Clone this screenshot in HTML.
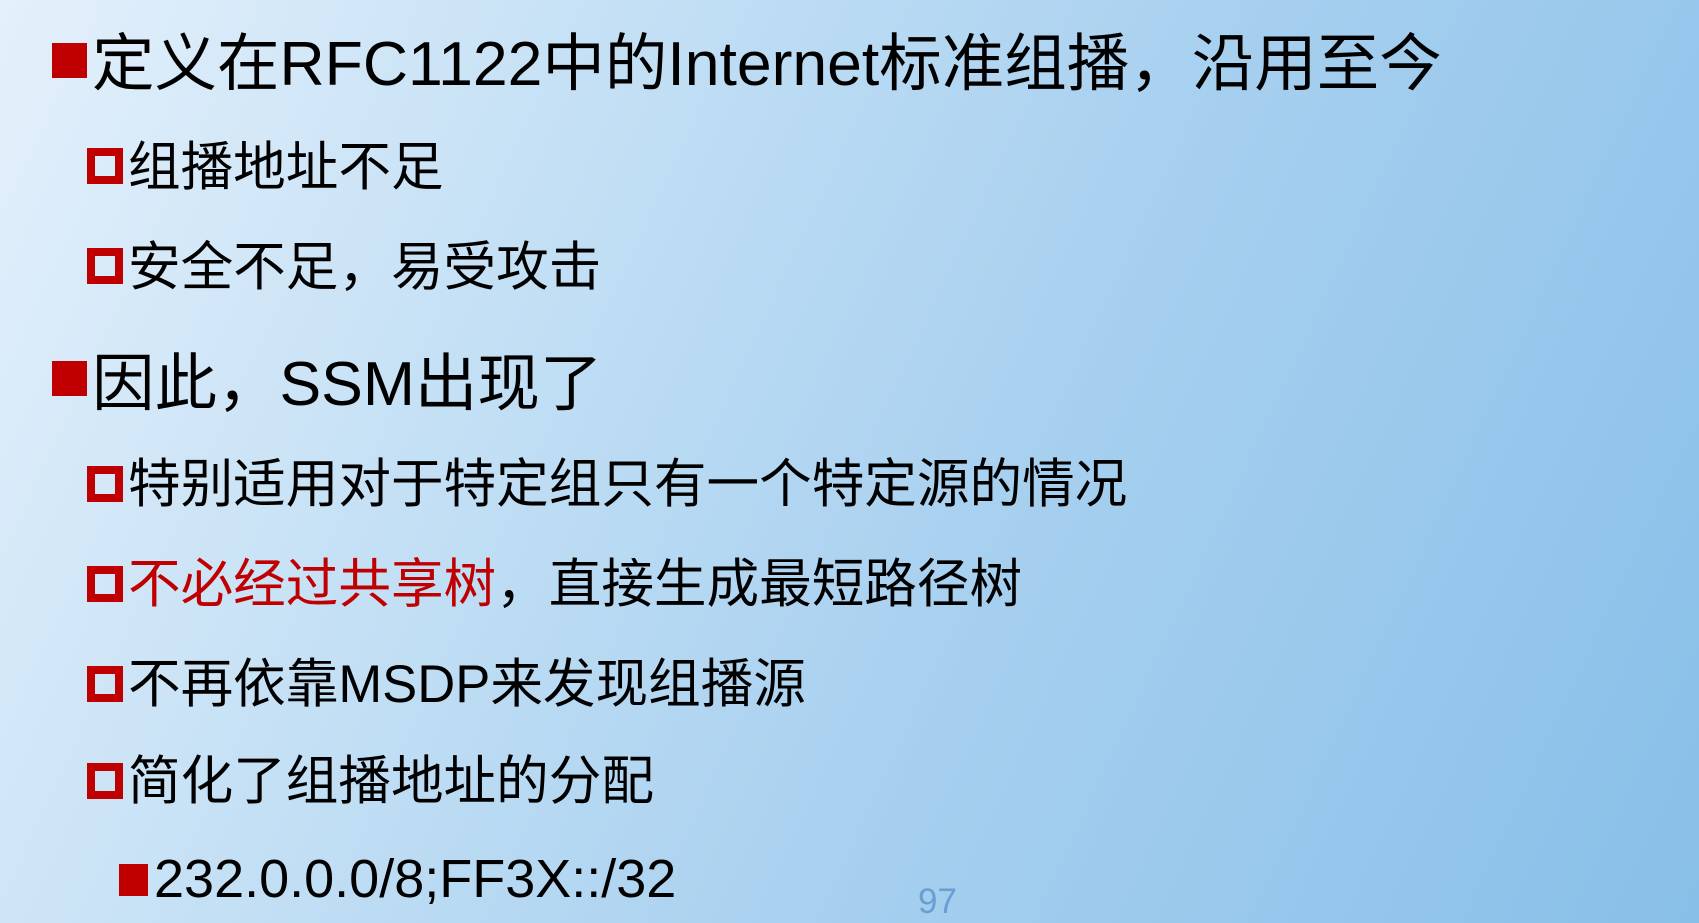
<!DOCTYPE html>
<html><head><meta charset="utf-8"><style>
html,body{margin:0;padding:0}
body{width:1699px;height:923px;overflow:hidden;position:relative;
background:linear-gradient(115deg,#e4f0fb 0%,#c4e0f5 30%,#a6cfef 60%,#88bfe8 100%);
font-family:"Liberation Sans","Noto Sans CJK SC",sans-serif;color:#000}
.t{position:absolute;white-space:nowrap;line-height:1}
.l1{font-size:62.5px}
.l2{font-size:52.6px}
.l3{font-size:54px}
.f{position:absolute;background:#c00000}
.h{position:absolute;border:8px solid #c00000;box-sizing:border-box;background:transparent}
.red{color:#c00000}
</style></head><body>
<div class="f" style="left:52px;top:43px;width:35px;height:35px"></div>
<div class="t l1" style="left:92px;top:33px">定义在RFC1122中的Internet标准组播，沿用至今</div>

<div class="h" style="left:87px;top:148px;width:36px;height:36px"></div>
<div class="t l2" style="left:128px;top:142px">组播地址不足</div>

<div class="h" style="left:87px;top:248px;width:36px;height:36px"></div>
<div class="t l2" style="left:128px;top:242px">安全不足，易受攻击</div>

<div class="f" style="left:52px;top:361px;width:35px;height:35px"></div>
<div class="t l1" style="left:92px;top:353px">因此，SSM出现了</div>

<div class="h" style="left:87px;top:466px;width:36px;height:36px"></div>
<div class="t l2" style="left:128px;top:459px">特别适用对于特定组只有一个特定源的情况</div>

<div class="h" style="left:87px;top:566px;width:36px;height:36px"></div>
<div class="t l2" style="left:128px;top:559px"><span class="red">不必经过共享树</span>，直接生成最短路径树</div>

<div class="h" style="left:87px;top:666px;width:36px;height:36px"></div>
<div class="t l2" style="left:128px;top:659px">不再依靠MSDP来发现组播源</div>

<div class="h" style="left:87px;top:763px;width:36px;height:36px"></div>
<div class="t l2" style="left:128px;top:756px">简化了组播地址的分配</div>

<div class="f" style="left:119px;top:864px;width:29px;height:32px"></div>
<div class="t l3" style="left:154px;top:852px">232.0.0.0/8;FF3X::/32</div>

<div class="t" style="left:918px;top:884px;font-size:35px;color:#6a9fd4">97</div>
</body></html>
